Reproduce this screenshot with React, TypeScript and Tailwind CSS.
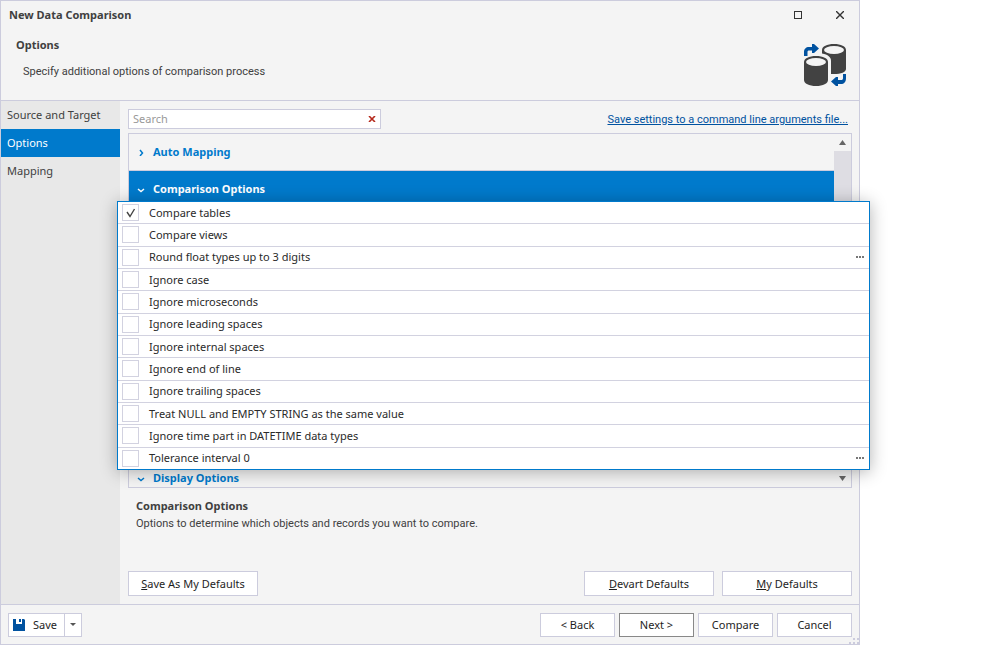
import { useState } from 'react';
import type { ReactNode } from 'react';
import { clsx } from 'clsx';

const steps = ['Source and Target', 'Options', 'Mapping'];

const compareOptions = [
  { label: 'Compare tables', checked: true },
  { label: 'Compare views' },
  { label: 'Round float types up to 3 digits', editable: true },
  { label: 'Ignore case' },
  { label: 'Ignore microseconds' },
  { label: 'Ignore leading spaces' },
  { label: 'Ignore internal spaces' },
  { label: 'Ignore end of line' },
  { label: 'Ignore trailing spaces' },
  { label: 'Treat NULL and EMPTY STRING as the same value' },
  { label: 'Ignore time part in DATETIME data types' },
  { label: 'Tolerance interval 0', editable: true },
];

function CompareIcon() {
  return (
    <svg width="42" height="42" viewBox="0 0 42 42" aria-hidden="true">
      <path d="M18 6C18 2.500 23 0 30 0s12 2.500 12 6v19c0 3-5 5-12 5h-3V17c0-4-3-6.500-9-7.500z" fill="#424242" />
      <ellipse cx="30" cy="6" rx="10" ry="4" fill="#f4f4f4" />
      <path d="M0 18c0-3.500 5-6 12-6s12 2.500 12 6v18c0 3.500-5 6-12 6S0 39.500 0 36z" fill="#424242" />
      <ellipse cx="12" cy="18" rx="10" ry="4" fill="#f4f4f4" />
      <path d="M0 12V8c0-3 2-5 5-5h3V0h2l5 4.500L10 9H8V6.500H5C4 6.500 3.500 7 3.500 8v4z" fill="#0052a0" />
      <path d="M42 30v4c0 4-2 6-5 6h-3v2h-2l-5-4.500 5-4.500h2v3h3c1.500 0 2-.5 2-2v-4z" fill="#0052a0" />
    </svg>
  );
}

function Chevron({ open }: { open?: boolean }) {
  return (
    <svg width="8" height="8" viewBox="0 0 8 8" fill="none" stroke="currentColor" strokeWidth="1.500" aria-hidden="true">
      <path d={open ? 'M1 4l3 2.500L7 4' : 'M3 2l2.500 3L3 8'} />
    </svg>
  );
}

function SectionHeader({ title, open, active }: { title: string; open?: boolean; active?: boolean }) {
  return (
    <button
      type="button"
      aria-expanded={!!open}
      className={clsx(
        'flex h-9 w-full items-center gap-2 pl-2 text-left font-bold',
        active ? 'bg-[#007acc] text-white' : 'text-[#007acc]'
      )}
    >
      <Chevron open={open} />
      {title}
    </button>
  );
}

function DialogButton({ children, className }: { children: ReactNode; className?: string }) {
  return (
    <button type="button" className={clsx('border bg-white text-center text-[#1e1e1e]', className)}>
      {children}
    </button>
  );
}

function OptionsPopup() {
  const [checked, setChecked] = useState(compareOptions.map((o) => !!o.checked));

  return (
    <ul className="absolute -left-3 -right-[19px] top-[67px] z-10 flex h-[269px] flex-col border border-[#007acc] bg-white text-[#2a2a2a] shadow-[0_2px_16px_rgba(0,0,0,0.3)]">
      {compareOptions.map((option, i) => (
        <li
          key={option.label}
          className="flex flex-1 items-center justify-between border-b border-[#d2d2e0] pl-1 pr-1 last:border-b-0"
        >
          <label className="flex items-center gap-[10px]">
            <span className="relative flex">
              <input
                type="checkbox"
                checked={checked[i]}
                onChange={() => setChecked(checked.map((c, j) => (j === i ? !c : c)))}
                className="size-[17px] appearance-none border border-[#d2d2e0] bg-white"
              />
              {checked[i] && (
                <svg
                  className="pointer-events-none absolute inset-0"
                  width="17"
                  height="17"
                  viewBox="0 0 17 17"
                  fill="none"
                  stroke="#444"
                  strokeWidth="1.400"
                >
                  <path d="M5 8l3 4.500L12.500 5" />
                </svg>
              )}
            </span>
            {option.label}
          </label>
          {option.editable && (
            <button type="button" aria-label={`Edit ${option.label}`}>
              <svg width="9" height="2" viewBox="0 0 9 2" fill="#777">
                <path d="M0 0h2v2H0zM3 0h2v2H3zM6 0h2v2H6z" />
              </svg>
            </button>
          )}
        </li>
      ))}
    </ul>
  );
}

export default function App() {
  return (
    <div className="min-h-screen bg-white font-['Noto_Sans',sans-serif] text-[11px] leading-4 text-[#404040]">
      <div className="flex min-h-screen w-[86%] flex-col border border-[#ccccdd] bg-[#f4f4f4]">
        <header className="h-[100px] border-b border-[#ccccdd] pl-2 pr-[11px]">
          <div className="flex h-7 items-center justify-between">
            <h1 className="font-bold">New Data Comparison</h1>
            <div className="flex gap-[26px]">
              <button type="button" aria-label="Maximize" className="flex size-4 items-center justify-center">
                <span className="size-2 border border-[#333]" />
              </button>
              <button type="button" aria-label="Close" className="flex size-4 items-center justify-center">
                <svg width="8" height="8" viewBox="0 0 8 8" stroke="#333" strokeWidth="1.400">
                  <path d="M0 0l8 8M8 0L0 8" />
                </svg>
              </button>
            </div>
          </div>
          <div className="flex justify-between pl-[7px] pr-[2px]">
            <div className="pt-2">
              <h2 className="font-bold">Options</h2>
              <p className="mt-[11px] pl-[7px] font-[Roboto,sans-serif]">
                Specify additional options of comparison process
              </p>
            </div>
            <div className="pt-[15px]">
              <CompareIcon />
            </div>
          </div>
        </header>

        <div className="flex flex-1">
          <nav className="w-[119px] shrink-0 bg-[#e8e8e8]">
            {steps.map((step) => (
              <a
                key={step}
                href="#"
                className={clsx('flex h-7 items-center pl-[6px]', step === 'Options' && 'bg-[#007acc] text-white')}
              >
                {step}
              </a>
            ))}
          </nav>

          <main className="flex flex-1 flex-col pb-2 pl-2 pr-[7px] pt-2">
            <div className="flex items-center justify-between">
              <div className="flex h-5 w-[253px] items-center border border-[#ccccdd] bg-white pr-1">
                <input
                  type="text"
                  aria-label="Search"
                  placeholder="Search"
                  className="min-w-0 flex-1 pl-1 outline-none placeholder:text-[#999]"
                />
                <button type="button" aria-label="Clear search" className="flex">
                  <svg width="8" height="6" viewBox="0 0 8 6" stroke="#b52a1c" strokeWidth="1.600">
                    <path d="M1 0l6 6M7 0L1 6" />
                  </svg>
                </button>
              </div>
              <a href="#" className="pr-1 pt-px font-[Roboto,sans-serif] text-[#0052a0] underline">
                Save settings to a command line arguments file...
              </a>
            </div>

            <div className="relative mt-1 flex h-[355px] border border-[#ccccdd]">
              <div className="flex flex-1 flex-col justify-between overflow-hidden">
                <div>
                  <div className="border-b border-[#ccccdd]">
                    <SectionHeader title="Auto Mapping" />
                  </div>
                  <SectionHeader title="Comparison Options" open active />
                </div>
                <div className="h-[27px]">
                  <SectionHeader title="Display Options" open />
                </div>
              </div>
              <div className="flex w-[17px] flex-col">
                <button type="button" aria-label="Scroll up" className="flex h-[17px] items-center justify-center">
                  <svg width="7" height="5" viewBox="0 0 7 5" fill="#666">
                    <path d="M0 5L3.500 0 7 5z" />
                  </svg>
                </button>
                <div className="h-40 bg-[#dedde3]" />
                <button type="button" aria-label="Scroll down" className="mt-auto flex h-[17px] items-center justify-center">
                  <svg width="7" height="5" viewBox="0 0 7 5" fill="#666">
                    <path d="M0 0h7L3.500 5z" />
                  </svg>
                </button>
              </div>
              <OptionsPopup />
            </div>

            <div className="px-2 pt-[10px]">
              <h3 className="font-bold">Comparison Options</h3>
              <p className="mt-[2px] font-[Roboto,sans-serif]">
                Options to determine which objects and records you want to compare.
              </p>
            </div>

            <div className="mt-auto flex gap-2">
              <DialogButton className="mr-auto h-[25px] w-[130px] border-[#ccccdd]">
                <u>S</u>ave As My Defaults
              </DialogButton>
              <DialogButton className="h-[25px] w-[130px] border-[#ccccdd]">
                <u>D</u>evart Defaults
              </DialogButton>
              <DialogButton className="h-[25px] w-[130px] border-[#ccccdd]">
                <u>M</u>y Defaults
              </DialogButton>
            </div>
          </main>
        </div>

        <footer className="relative flex h-10 items-center gap-1 border-t border-[#ccccdd] px-[7px]">
          <div className="mr-auto flex h-6 border border-[#ccccdd] bg-white text-[#1e1e1e]">
            <button type="button" className="flex w-[55px] items-center gap-2 pl-1">
              <svg width="12" height="12" viewBox="0 0 12 12" fill="#0052a0" aria-hidden="true">
                <path d="M0 0h3v5h6V0h2l1 1v11H0zM6 0h2v3H6z" />
              </svg>
              Save
            </button>
            <button
              type="button"
              aria-label="More save options"
              className="flex w-[17px] items-center justify-center border-l border-[#ccccdd]"
            >
              <svg width="6" height="3" viewBox="0 0 6 3" fill="#555">
                <path d="M0 0h6L3 3z" />
              </svg>
            </button>
          </div>
          <DialogButton className="h-6 w-[75px] border-[#ccccdd]">&lt; Back</DialogButton>
          <DialogButton className="h-6 w-[75px] border-[#888]">Next &gt;</DialogButton>
          <DialogButton className="h-6 w-[75px] border-[#ccccdd]">Compare</DialogButton>
          <DialogButton className="h-6 w-[75px] border-[#ccccdd]">Cancel</DialogButton>
          <svg className="absolute bottom-0 right-0" width="10" height="6" viewBox="0 0 10 6" fill="#ccccdd" aria-hidden="true">
            <path d="M4 0h2v2H4zM8 0h2v2H8zM0 4h2v2H0zM4 4h2v2H4zM8 4h2v2H8z" />
          </svg>
        </footer>
      </div>
    </div>
  );
}
